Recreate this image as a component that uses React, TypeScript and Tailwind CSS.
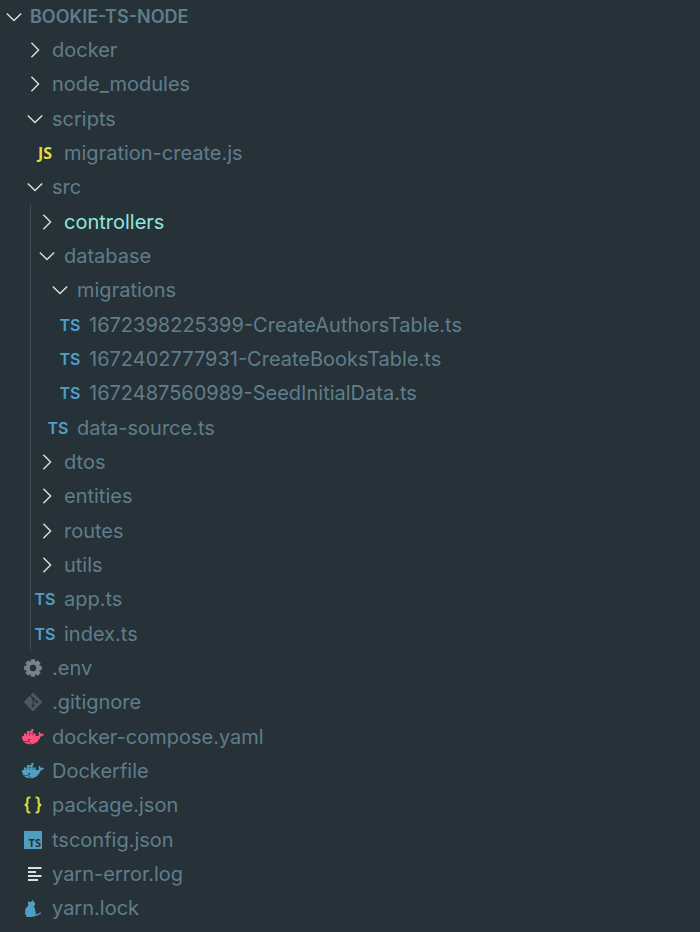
import { useState } from "react";
import { SiGit } from "react-icons/si";

type IconName =
  | "js"
  | "ts"
  | "env"
  | "git"
  | "compose"
  | "docker"
  | "json"
  | "tsconfig"
  | "log"
  | "yarn";

type TreeNode = {
  name: string;
  icon?: IconName;
  open?: boolean;
  changed?: boolean;
  guide?: boolean;
  children?: TreeNode[];
};

type Row = { node: TreeNode; path: string; depth: number; guide: boolean };

const tree: TreeNode[] = [
  { name: "docker", children: [] },
  { name: "node_modules", children: [] },
  {
    name: "scripts",
    open: true,
    children: [{ name: "migration-create.js", icon: "js" }],
  },
  {
    name: "src",
    open: true,
    guide: true,
    children: [
      { name: "controllers", changed: true, children: [] },
      {
        name: "database",
        open: true,
        children: [
          {
            name: "migrations",
            open: true,
            children: [
              { name: "1672398225399-CreateAuthorsTable.ts", icon: "ts" },
              { name: "1672402777931-CreateBooksTable.ts", icon: "ts" },
              { name: "1672487560989-SeedInitialData.ts", icon: "ts" },
            ],
          },
          { name: "data-source.ts", icon: "ts" },
        ],
      },
      { name: "dtos", children: [] },
      { name: "entities", children: [] },
      { name: "routes", children: [] },
      { name: "utils", children: [] },
      { name: "app.ts", icon: "ts" },
      { name: "index.ts", icon: "ts" },
    ],
  },
  { name: ".env", icon: "env" },
  { name: ".gitignore", icon: "git" },
  { name: "docker-compose.yaml", icon: "compose" },
  { name: "Dockerfile", icon: "docker" },
  { name: "package.json", icon: "json" },
  { name: "tsconfig.json", icon: "tsconfig" },
  { name: "yarn-error.log", icon: "log" },
  { name: "yarn.lock", icon: "yarn" },
];

// left edge of the icon column for each level
const indents = ["ml-[21px]", "ml-[2px]", "ml-[15px]", "ml-[27px]"];

const getPaths = (nodes: TreeNode[], parent = ""): string[] =>
  nodes.flatMap((node) => {
    const path = `${parent}/${node.name}`;
    return [...(node.open ? [path] : []), ...getPaths(node.children || [], path)];
  });

const getRows = (
  nodes: TreeNode[],
  open: string[],
  parent = "",
  depth = 0,
  guide = false
): Row[] =>
  nodes.flatMap((node) => {
    const path = `${parent}/${node.name}`;
    const row = { node, path, depth, guide };
    if (!node.children || !open.includes(path)) return [row];
    return [
      row,
      ...getRows(node.children, open, path, depth + 1, guide || !!node.guide),
    ];
  });

const Chevron = ({ open }: { open: boolean }) => (
  <svg
    viewBox="0 0 20 20"
    className="h-5 w-5 shrink-0 fill-none stroke-[#dcdfdf]"
    strokeWidth="1.4"
  >
    <path d={open ? "M2.8 6.4 10 13.6 17.2 6.4" : "M6.4 2.8 13.6 10 6.4 17.2"} />
  </svg>
);

const Gear = () => (
  <svg viewBox="0 0 20 20" className="h-5 w-5 fill-[#73848b]">
    {[0, 45, 90, 135].map((angle) => (
      <rect
        key={angle}
        x="7.8"
        y="1.2"
        width="4.4"
        height="17.6"
        rx="0.8"
        transform={`rotate(${angle} 10 10)`}
      />
    ))}
    <circle cx="10" cy="10" r="7" />
    <circle cx="10" cy="10" r="3.2" className="fill-[#263238]" />
  </svg>
);

const Whale = ({ className }: { className: string }) => (
  <svg viewBox="0 0 24 18" className={`h-[18px] w-6 ${className}`}>
    <path d="M1 8H16.6C17.4 8 17.9 7.6 18.1 7C17.3 5.9 17.4 4.8 18.2 3.7C19.2 4.3 19.8 5.1 19.9 6C21 5.7 22.1 5.8 22.9 6.2C22.3 7.6 21.1 8.3 19.5 8.4C18 13.1 14.6 16.2 9.3 16.2C4 16.2 1 13.7 1 8Z" />
    <path d="M2.9 5.6H5.6V8.1H2.9ZM6 5.6H8.7V8.1H6ZM9.1 5.6H11.8V8.1H9.1ZM12.2 5.6H14.7V8.1H12.2ZM6 3.1H8.7V5.2H6ZM9.1 3.1H11.8V5.2H9.1ZM10.2 0.9H12.5V3.1H10.2Z" />
    <circle cx="8.2" cy="11.8" r="0.9" className="fill-[#263238]" />
    <path
      d="M2.3 13.4C4.5 13.9 6.2 13.7 7.2 13.1C7.7 14.5 8.8 15.4 10.2 15.8"
      className="fill-none stroke-[#263238]"
      strokeWidth="0.7"
    />
  </svg>
);

const Braces = () => (
  <svg
    viewBox="0 0 20 20"
    className="h-5 w-5 fill-none stroke-[#d9d93f]"
    strokeWidth="2.1"
  >
    <path d="M7.4 2.5H6.3C5 2.5 4.4 3.2 4.4 4.4V7.4C4.4 8.9 3.7 9.8 1.8 10C3.7 10.2 4.4 11.1 4.4 12.6V15.6C4.4 16.8 5 17.5 6.3 17.5H7.4" />
    <path d="M12.6 2.5H13.7C15 2.5 15.6 3.2 15.6 4.4V7.4C15.6 8.9 16.3 9.8 18.2 10C16.3 10.2 15.6 11.1 15.6 12.6V15.6C15.6 16.8 15 17.5 13.7 17.5H12.6" />
  </svg>
);

const Cat = () => (
  <svg viewBox="0 0 20 20" className="h-5 w-5 fill-[#519fc0]">
    <path d="M9.9 2.1 10.9 4C11.9 4.4 12.3 5.4 12 6.4C11.9 7.4 11.3 8 10.6 8.3C11.8 9.7 12.4 11.3 12.2 13C12.9 14.2 13 15.4 12.6 16.5C14.6 16.6 15.9 14.9 17.7 14.6C18.4 14.6 18.4 15.2 17.8 15.5C16.1 16.3 14.8 18 12.4 18.1C9.9 19.2 6 19.3 3.5 18.8C2.9 18.5 3 17.9 3.4 17.7C2 16.2 1.5 14.4 2.4 12.8C2.1 11.3 2.6 9.9 4.2 9.1C4.4 8.2 4.9 7.5 5.5 7C4.9 5.9 4.8 4.7 5 3.3L6.8 4.2C7.9 4 9.1 3.4 9.9 2.1Z" />
  </svg>
);

const FileIcon = ({ name }: { name: IconName }) => {
  switch (name) {
    case "js":
      return (
        <span className="font-['Noto_Sans',sans-serif] text-base font-bold text-[#e0df3e]">
          JS
        </span>
      );
    case "ts":
      return (
        <span className="text-base font-semibold text-[#4fa0c8]">TS</span>
      );
    case "env":
      return <Gear />;
    case "git":
      return <SiGit className="h-[18px] w-[18px] text-[#475a63]" />;
    case "compose":
      return <Whale className="fill-[#f9507f]" />;
    case "docker":
      return <Whale className="fill-[#519fc0]" />;
    case "json":
      return <Braces />;
    case "tsconfig":
      return (
        <span className="flex h-[18px] w-[18px] items-end justify-end bg-[#519fc0] px-px font-['Noto_Sans',sans-serif] text-[11px] leading-[13px] font-bold text-[#263238]">
          TS
        </span>
      );
    case "log":
      return (
        <svg viewBox="0 0 20 20" className="ml-1 h-5 w-5 fill-[#dcdfdf]">
          <path d="M3 3H16.5V5H3ZM3 7H11V9H3ZM3 11H16.5V13H3ZM3 15H13V17H3Z" />
        </svg>
      );
    case "yarn":
      return <Cat />;
  }
};

const App = () => {
  const [showTree, setShowTree] = useState(true);
  const [openPaths, setOpenPaths] = useState<string[]>(getPaths(tree));

  const toggle = (path: string) => {
    setOpenPaths((prev) =>
      prev.includes(path) ? prev.filter((p) => p !== path) : [...prev, path]
    );
  };

  return (
    <div className="min-h-screen bg-[#263238] font-['Inter',sans-serif] text-[#607d8b]">
      <button
        type="button"
        aria-expanded={showTree}
        onClick={() => setShowTree(!showTree)}
        className="flex h-[33px] w-full items-center gap-[6px] pl-1 text-lg leading-5 font-semibold"
      >
        <Chevron open={showTree} />
        BOOKIE-TS-NODE
      </button>

      {showTree && (
        <ul>
          {getRows(tree, openPaths).map(({ node, path, depth, guide }) => (
            <li key={path} className="h-[34px] nth-[3n]:h-[35px]">
              <button
                type="button"
                aria-expanded={node.children && openPaths.includes(path)}
                onClick={() => node.children && toggle(path)}
                className="flex h-full w-full items-center text-left"
              >
                {depth > 0 && (
                  <span
                    className={`ml-[30px] w-px self-stretch ${
                      guide ? "bg-[#3c4e57]" : ""
                    }`}
                  ></span>
                )}
                <span
                  className={`flex w-6 shrink-0 items-center ${
                    node.icon ? "justify-center" : "justify-end"
                  } ${indents[depth]}`}
                >
                  {node.icon ? (
                    <FileIcon name={node.icon} />
                  ) : (
                    <Chevron open={openPaths.includes(path)} />
                  )}
                </span>
                <span
                  className={`ml-[7px] text-xl whitespace-nowrap ${
                    node.changed ? "text-[#8ce8d8]" : ""
                  }`}
                >
                  {node.name}
                </span>
              </button>
            </li>
          ))}
        </ul>
      )}
    </div>
  );
};

export default App;
